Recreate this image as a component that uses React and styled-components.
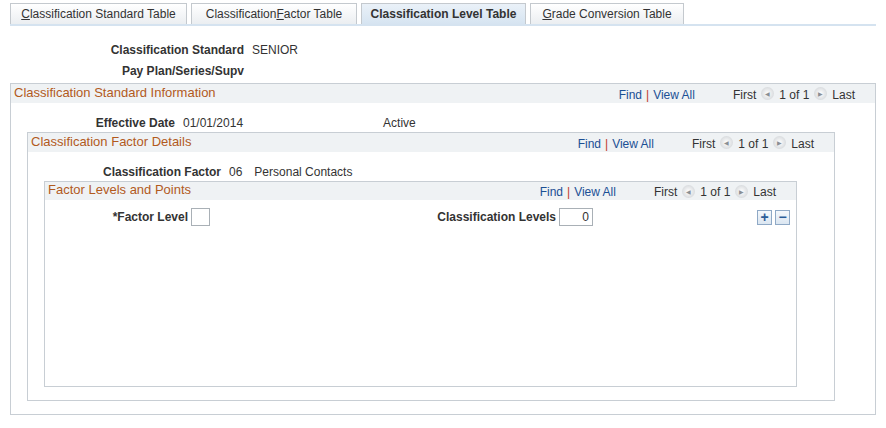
import styled, { createGlobalStyle } from "styled-components";

const Global = createGlobalStyle`
  body { margin: 0; background: #fff; font-family: Arial, "Liberation Sans", sans-serif; font-size: 12px; color: #333; }
`;

const TABS = [
  { label: "Classification Standard Table", key: "C", w: 177 },
  { label: "Classification Factor Table", key: "F", w: 166 },
  { label: "Classification Level Table", active: true, w: 165 },
  { label: "Grade Conversion Table", key: "G", w: 154 },
];

function Tab({ label, k, active, w }) {
  let content = label;
  if (k) {
    const i = label.indexOf(k === "F" ? "Factor" : k);
    content = (
      <>
        {label.slice(0, i)}<u>{label[i]}</u>{label.slice(i + 1)}
      </>
    );
  }
  return <TabBtn $active={active} style={{ width: w }}>{content}</TabBtn>;
}

function Nav() {
  return (
    <NavBar>
      <Link>Find</Link><Sep>|</Sep><Link>View All</Link>
      <Spacer />
      <span>First</span><Arrow>◀</Arrow><span>1 of 1</span><Arrow>▶</Arrow><span>Last</span>
    </NavBar>
  );
}

export default function App() {
  return (
    <Page>
      <Global />
      <TabRow>
        {TABS.map((t) => <Tab key={t.label} label={t.label} k={t.key} active={t.active} w={t.w} />)}
      </TabRow>
      <Field $top={17} $lw={234}><Label>Classification Standard</Label><Value>SENIOR</Value></Field>
      <Field $top={7} $lw={234}><Label>Pay Plan/Series/Supv</Label></Field>
      <Box $w={866} $h={332} $mt={5}>
        <Header><Title>Classification Standard Information</Title><Nav /></Header>
        <Field $top={13} $lw={164}><Label>Effective Date</Label><Value>01/01/2014</Value><Value $ml={140}>Active</Value></Field>
        <Box $w={808} $h={269} $mt={2} $ml={16}>
          <Header><Title>Classification Factor Details</Title><Nav /></Header>
          <Field $top={13} $lw={193}><Label>Classification Factor</Label><Value>06</Value><Value $ml={12}>Personal Contacts</Value></Field>
          <Box $w={753} $h={206} $mt={2} $ml={16}>
            <Header $h={18}><Title>Factor Levels and Points</Title><Nav /></Header>
            <InputRow>
              <Label style={{ width: 143 }}>*Factor Level</Label>
              <Input $w={19} />
              <Label style={{ width: 346 }}>Classification Levels</Label>
              <Input $w={34} $right>0</Input>
              <Spacer />
              <IconBtn>+</IconBtn><IconBtn>−</IconBtn>
            </InputRow>
          </Box>
        </Box>
      </Box>
    </Page>
  );
}

const Page = styled.div`padding: 3px 10px; width: 866px;`;
const TabRow = styled.div`
  display: flex; gap: 4px; height: 21px; border-bottom: 2px solid #d5e3f0; padding-left: 0;
`;
const TabBtn = styled.div`
  box-sizing: border-box; height: 21px; display: flex; align-items: center; justify-content: center;
  border: 1px solid #c4c9ce; border-bottom: none; font-size: 12px; color: #333;
  background: ${({ $active }) => ($active ? "linear-gradient(#eaf1f8, #d6e4f1)" : "linear-gradient(#ffffff, #ebeef1)")};
  font-weight: ${({ $active }) => ($active ? "bold" : "normal")};
  u { text-decoration: underline; }
`;
const Field = styled.div`
  display: flex; align-items: center; margin-top: ${({ $top }) => $top}px; height: 14px;
  & > span:first-child { width: ${({ $lw }) => $lw}px; }
`;
const Label = styled.span`font-weight: bold; text-align: right; display: inline-block; flex-shrink: 0;`;
const Value = styled.span`margin-left: ${({ $ml }) => $ml ?? 8}px;`;
const Box = styled.div`
  box-sizing: border-box; width: ${({ $w }) => $w}px; height: ${({ $h }) => $h}px;
  margin-top: ${({ $mt }) => $mt}px; margin-left: ${({ $ml }) => $ml ?? 0}px;
  border: 1px solid #c8ced4; background: #fff;
`;
const Header = styled.div`
  display: flex; align-items: center; justify-content: space-between; height: ${({ $h }) => $h ?? 19}px;
  background: #eff2f4; padding: 0 20px 0 3px;
`;
const Title = styled.span`color: #b25a1d; font-size: 13px; margin-top: -3px;`;
const NavBar = styled.div`display: flex; align-items: center; gap: 3px; margin-top: 2px;`;
const Link = styled.span`color: #1b4f94;`;
const Sep = styled.span`color: #c0392b; margin: 0 1px;`;
const Spacer = styled.span`flex: 1; min-width: 32px;`;
const Arrow = styled.span`
  display: inline-flex; width: 13px; height: 13px; border-radius: 50%; align-items: center; justify-content: center;
  background: radial-gradient(#fff, #c9cdd1); color: #8a8f94; font-size: 6px; margin: -2px 2px 0;
`;
const InputRow = styled.div`display: flex; align-items: center; margin-top: 8px; padding-right: 6px;`;
const Input = styled.div`
  box-sizing: border-box; width: ${({ $w }) => $w}px; height: 18px; border: 1px solid #a9b0b6;
  margin-left: 3px; text-align: right; padding-right: 3px; line-height: 16px;
`;
const IconBtn = styled.div`
  box-sizing: border-box; width: 15px; height: 15px; border: 1px solid #8fa9c6; margin-left: 3px;
  background: linear-gradient(#f4f8fc, #dbe6f1); color: #2a5c99; font-weight: bold; font-size: 14px;
  display: flex; align-items: center; justify-content: center; line-height: 1;
`;
